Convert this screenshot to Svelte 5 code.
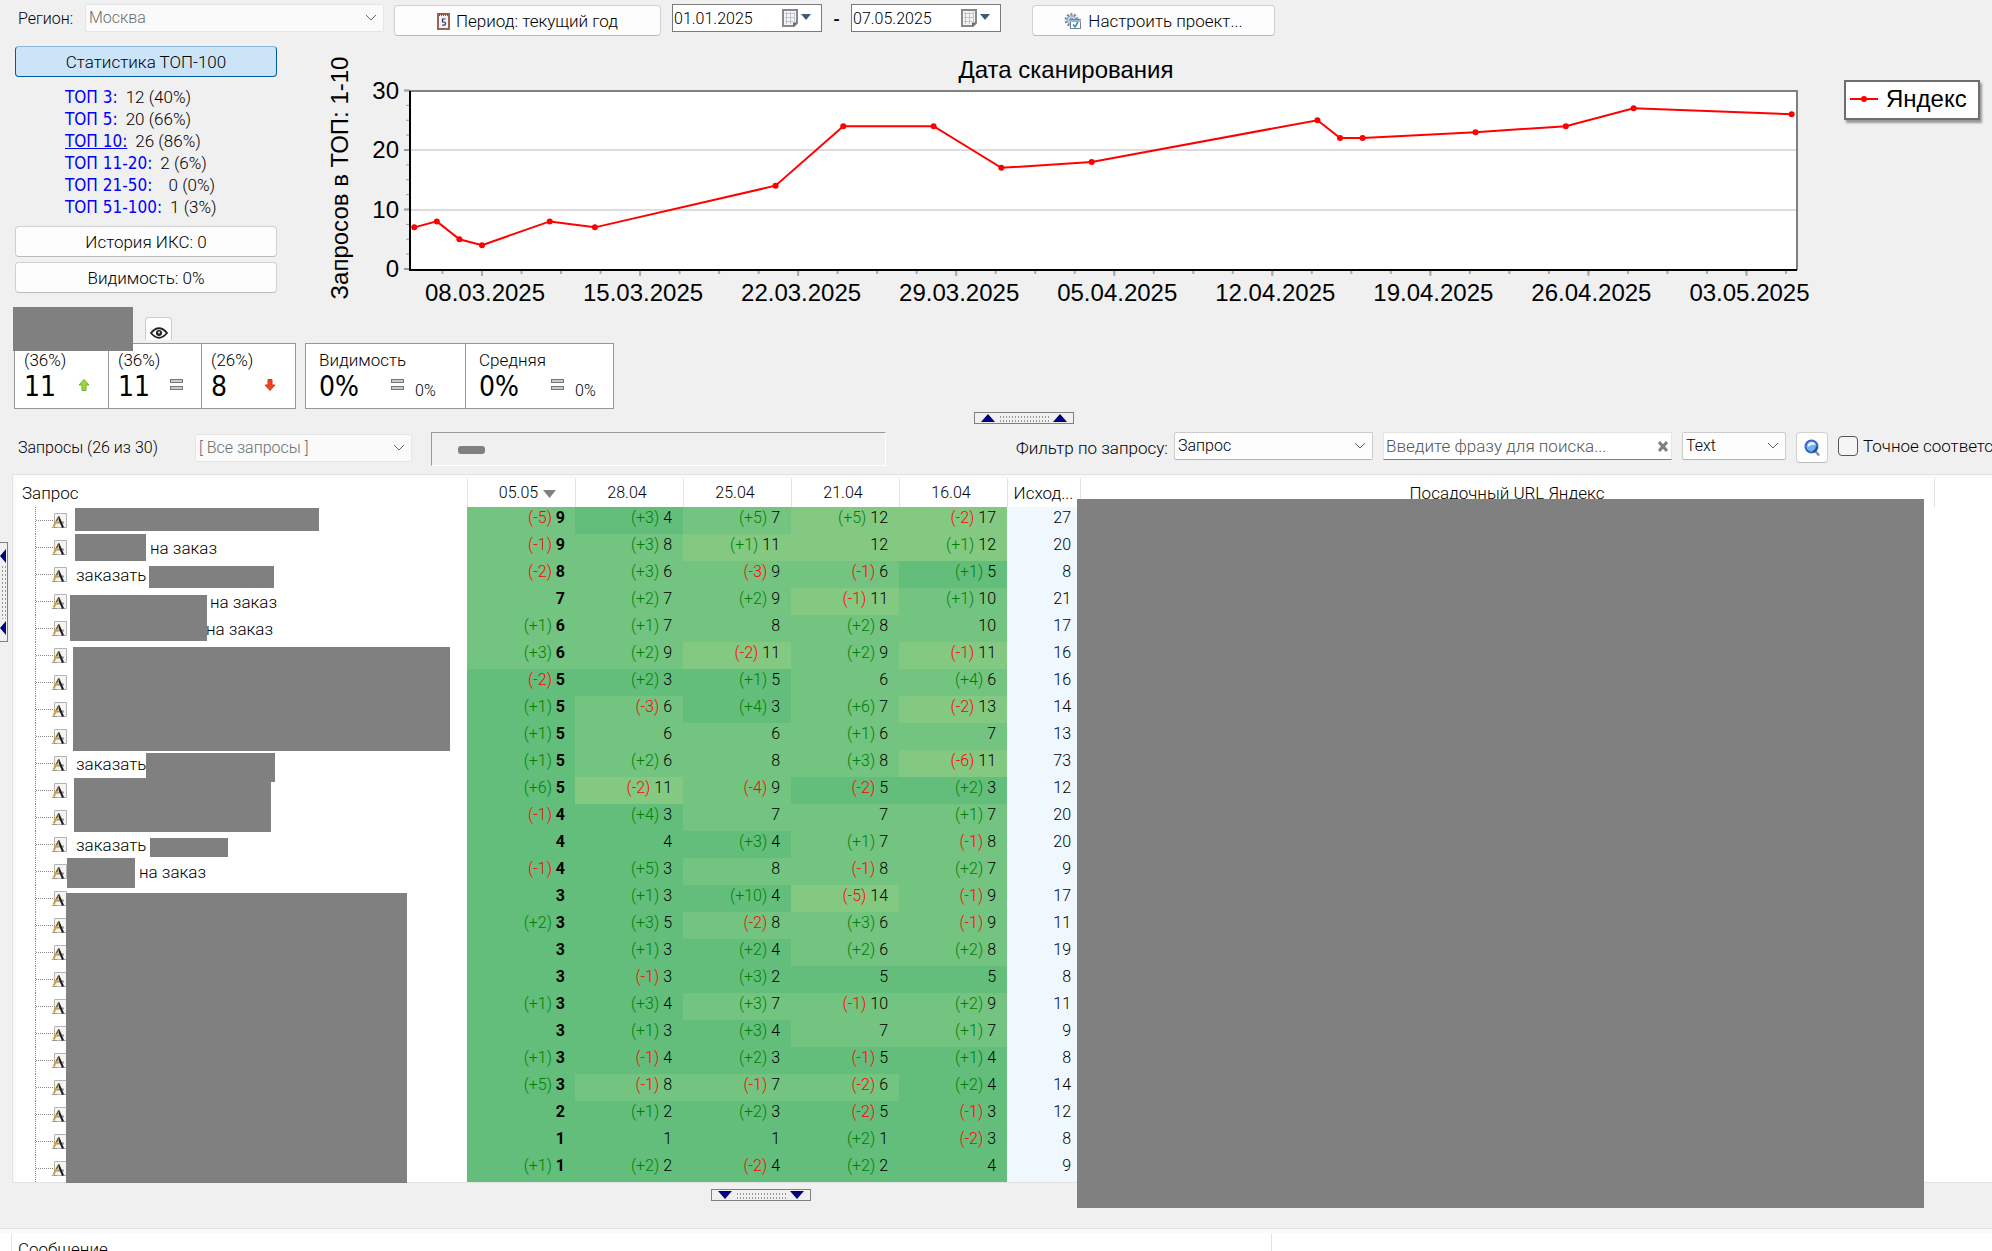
<script>
  const parse = (s) => s.trim().split(/\s+/).map((t) => {
    const m = t.match(/^(?:\(([+-]\d+)\))?(\d+)$/);
    return { delta: m[1] ?? '', value: +m[2] };
  });
  const shade = (v) => (v <= 5 ? 'top5' : v <= 10 ? 'top10' : 'top20');

  const dates = ['05.05', '28.04', '25.04', '21.04', '16.04'];

  // Text of a query with its indent, and the blocks that hide private words: [left, top, width, height].
  const rows = [
    { p: '(-5)9 (+3)4 (+5)7 (+5)12 (-2)17', s: 27, hide: [59, 1, 244, 23] },
    { p: '(-1)9 (+3)8 (+1)11 12 (+1)12', s: 20, text: 'на заказ', at: 134, hide: [59, 0, 71, 27] },
    { p: '(-2)8 (+3)6 (-3)9 (-1)6 (+1)5', s: 8, text: 'заказать', at: 60, hide: [133, 5, 125, 22] },
    { p: '7 (+2)7 (+2)9 (-1)11 (+1)10', s: 21, text: 'на заказ', at: 194, hide: [54, 7, 137, 46] },
    { p: '(+1)6 (+1)7 8 (+2)8 10', s: 17, text: 'на заказ', at: 190 },
    { p: '(+3)6 (+2)9 (-2)11 (+2)9 (-1)11', s: 16, hide: [57, 5, 377, 104] },
    { p: '(-2)5 (+2)3 (+1)5 6 (+4)6', s: 16 },
    { p: '(+1)5 (-3)6 (+4)3 (+6)7 (-2)13', s: 14 },
    { p: '(+1)5 6 6 (+1)6 7', s: 13 },
    { p: '(+1)5 (+2)6 8 (+3)8 (-6)11', s: 73, text: 'заказать', at: 60, hide: [130, 3, 129, 29] },
    { p: '(+6)5 (-2)11 (-4)9 (-2)5 (+2)3', s: 12, hide: [58, 1, 197, 54] },
    { p: '(-1)4 (+4)3 7 7 (+1)7', s: 20 },
    { p: '4 4 (+3)4 (+1)7 (-1)8', s: 20, text: 'заказать', at: 60, hide: [134, 7, 78, 19] },
    { p: '(-1)4 (+5)3 8 (-1)8 (+2)7', s: 9, text: 'на заказ', at: 123, hide: [51, 0, 68, 30] },
    { p: '3 (+1)3 (+10)4 (-5)14 (-1)9', s: 17, hide: [50, 8, 341, 290] },
    { p: '(+2)3 (+3)5 (-2)8 (+3)6 (-1)9', s: 11 },
    { p: '3 (+1)3 (+2)4 (+2)6 (+2)8', s: 19 },
    { p: '3 (-1)3 (+3)2 5 5', s: 8 },
    { p: '(+1)3 (+3)4 (+3)7 (-1)10 (+2)9', s: 11 },
    { p: '3 (+1)3 (+3)4 7 (+1)7', s: 9 },
    { p: '(+1)3 (-1)4 (+2)3 (-1)5 (+1)4', s: 8 },
    { p: '(+5)3 (-1)8 (-1)7 (-2)6 (+2)4', s: 14 },
    { p: '2 (+1)2 (+2)3 (-2)5 (-1)3', s: 12 },
    { p: '1 1 1 (+2)1 (-2)3', s: 8 },
    { p: '(+1)1 (+2)2 (-2)4 (+2)2 4', s: 9 }
  ].map((r) => ({ ...r, cells: parse(r.p) }));

  const tops = [
    ['ТОП 3:', '12 (40%)'],
    ['ТОП 5:', '20 (66%)'],
    ['ТОП 10:', '26 (86%)'],
    ['ТОП 11-20:', '2 (6%)'],
    ['ТОП 21-50:', '  0 (0%)'],
    ['ТОП 51-100:', '1 (3%)']
  ];

  // Chart: days counted from 08.03.2025.
  const days = [-3, -2, -1, 0, 3, 5, 13, 16, 20, 23, 27, 37, 38, 39, 44, 48, 51, 58];
  const found = [7, 8, 5, 4, 8, 7, 14, 24, 24, 17, 18, 25, 22, 22, 23, 24, 27, 26];
  const px = (d) => 162 + d * 22.58;
  const py = (v) => 223 - v * 5.95;
  const pts = days.map((d, i) => ({ x: px(d), y: py(found[i]) }));
  const line = pts.map((p) => `${p.x},${p.y}`).join(' ');
  const weeks = ['08.03.2025', '15.03.2025', '22.03.2025', '29.03.2025', '05.04.2025', '12.04.2025', '19.04.2025', '26.04.2025', '03.05.2025'];
  const minorX = Array.from({ length: 35 }, (_, i) => px((i - 1) * 1.75));
  const minorY = Array.from({ length: 12 }, (_, i) => py(i * 2.5));

  let region = $state('Москва');
  let from = $state('01.01.2025');
  let to = $state('07.05.2025');
  let phrase = $state('');
  let exact = $state(false);
</script>

{#snippet chevron()}
  <svg class="chev" viewBox="0 0 12 8" aria-hidden="true"><path d="M1 1l5 5 5-5" /></svg>
{/snippet}

{#snippet dateIcon()}
  <svg width="32" height="20" viewBox="0 0 32 20" aria-hidden="true">
    <path d="M2 2h14v13l-3 3H2z" fill="#f4f4f6" stroke="#8c8689" stroke-width="2" />
    <path d="M4 5.500h10M4 9.500h10M4 13.500h8M5.500 4v12M9.500 4v12M13.500 4v10" stroke="#bcc4d2" fill="none" />
    <path d="M12 18.500v-4h4z" fill="#6c6669" />
    <path d="M20 6h10l-5 6z" fill="#40587c" />
  </svg>
{/snippet}

{#snippet equals()}
  <svg width="13" height="12" viewBox="0 0 13 12" aria-hidden="true">
    <rect x=".5" y=".5" width="12" height="3" fill="#ccc" stroke="#777" />
    <rect x=".5" y="7.500" width="12" height="3" fill="#ccc" stroke="#777" />
  </svg>
{/snippet}

{#snippet gripTri(d)}
  <svg width="14" height="8" viewBox="0 0 14 8" aria-hidden="true"><path {d} fill="#00007f" /></svg>
{/snippet}

<main class="app">
  <header class="bar">
    <label for="region" class="region-label">Регион:</label>
    <span class="select region">
      <select id="region" bind:value={region} disabled><option>Москва</option></select>
      {@render chevron()}
    </span>
    <button class="btn period">
      <svg width="13" height="18" viewBox="0 0 13 18" aria-hidden="true">
        <rect x="1" y="2" width="11" height="15" fill="#eef1fa" stroke="#9a6450" stroke-width="2" />
        <path d="M2 2.500h9" stroke="#4b5f9a" stroke-width="3" stroke-dasharray="1 1" />
        <path d="M8.500 7h-3v3h1.500q1.500 0 1.500 1.600t-1.600 1.600h-1.600" fill="none" stroke="#26335c" stroke-width="1.200" />
      </svg>
      Период: текущий год
    </button>
    <span class="date">
      <input aria-label="Начало периода" bind:value={from} />
      {@render dateIcon()}
    </span>
    <span class="dash">-</span>
    <span class="date">
      <input aria-label="Конец периода" bind:value={to} />
      {@render dateIcon()}
    </span>
    <button class="btn setup">
      <svg width="18" height="18" viewBox="0 0 18 18" aria-hidden="true">
        <circle cx="7.500" cy="8" r="5.500" fill="none" stroke="#7796b4" stroke-width="3" stroke-dasharray="2 1.450" />
        <circle cx="7.500" cy="8" r="4.200" fill="#cfe0ef" stroke="#8fabc5" stroke-width="1.500" />
        <circle cx="7.500" cy="8" r="1.800" fill="#fff" stroke="#6886a3" />
        <rect x="6.500" y="7.500" width="10" height="9" fill="#fff" stroke="#77818c" />
        <path d="M6 9h11" stroke="#9fb5c9" stroke-width="2" />
        <path d="M9 12.500l2 2.500 3-5" fill="none" stroke="#1f8ad6" stroke-width="1.500" />
      </svg>
      Настроить проект...
    </button>
  </header>

  <section class="overview">
    <div class="stats">
      <button class="btn active">Статистика ТОП-100</button>
      <ul>
        {#each tops as [name, value]}
          <li><a href="#top" class:current={name === 'ТОП 10:'}>{name}</a><span>{value}</span></li>
        {/each}
      </ul>
      <button class="btn">История ИКС: 0</button>
      <button class="btn">Видимость: 0%</button>
    </div>

    <svg class="chart" viewBox="0 0 1500 263" role="img" aria-label="Запросов в ТОП: 1-10">
      <text x="746" y="32" text-anchor="middle">Дата сканирования</text>
      <text transform="translate(28 132) rotate(-90)" text-anchor="middle">Запросов в ТОП: 1-10</text>
      <rect x="90" y="45" width="1387" height="179" fill="#fff" />
      {#each [10, 20] as v}
        <path d="M90 {Math.round(py(v))}H1477" stroke="#dcdcdc" stroke-width="2" />
      {/each}
      <path d="M90 45H1477V224" fill="none" stroke="#808080" stroke-width="2" />
      {#each minorY as y}<path d="M86 {y}h4" stroke="#999" />{/each}
      {#each minorX as x}<path d="M{x} 225v3" stroke="#aaa" stroke-width="2" />{/each}
      {#each [0, 10, 20, 30] as v}
        <path d="M84 {py(v)}h6" stroke="#999" stroke-width="2" />
        <text x="79" y={py(v) + 8} text-anchor="end">{v}</text>
      {/each}
      {#each weeks as w, i}
        <path d="M{px(i * 7)} 225v5" stroke="#aaa" stroke-width="2" />
        <text x={px(i * 7) + 3} y="255" text-anchor="middle">{w}</text>
      {/each}
      <path d="M90 45V224H1477" fill="none" stroke="#000" stroke-width="2" />
      <polyline points={line} fill="none" stroke="#f00" stroke-width="2" />
      {#each pts as p}<circle cx={p.x} cy={p.y} r="3" fill="#f00" />{/each}
    </svg>

    <div class="legend">
      <svg width="28" height="8" viewBox="0 0 28 8" aria-hidden="true">
        <path d="M0 4h28" stroke="#f00" stroke-width="2" /><circle cx="14" cy="4" r="3" fill="#f00" />
      </svg>
      Яндекс
    </div>
  </section>

  <section class="summary">
    <div class="summary-head">
      <span class="hidden-title"></span>
      <button class="eye" aria-label="Показать">
        <svg width="18" height="12" viewBox="0 0 18 12" aria-hidden="true">
          <path d="M1 6q8-9.500 16 0q-8 9.500-16 0z" fill="#fff" stroke="#222" stroke-width="1.800" />
          <circle cx="9" cy="6" r="3" fill="#222" /><circle cx="9" cy="5.500" r="1" fill="#fff" />
        </svg>
      </button>
    </div>
    <div class="cards">
      <div class="card">
        <span class="cap">(36%)</span><strong>11</strong>
        <svg class="mark" width="12" height="12" viewBox="0 0 12 12" aria-hidden="true"><path d="M6 .5l5 5.500H8v5.500H4V6H1z" fill="#9bd83c" stroke="#6fae2c" /></svg>
      </div>
      <div class="card">
        <span class="cap">(36%)</span><strong>11</strong><span class="mark">{@render equals()}</span>
      </div>
      <div class="card">
        <span class="cap">(26%)</span><strong>8</strong>
        <svg class="mark" width="12" height="12" viewBox="0 0 12 12" aria-hidden="true"><path d="M6 11.500L1 6h3V.5h4V6h3z" fill="#f0441f" stroke="#d03818" /></svg>
      </div>
    </div>
    <div class="cards wide">
      <div class="card">
        <span class="cap">Видимость</span><strong>0%</strong><span class="mark">{@render equals()}</span><span class="diff">0%</span>
      </div>
      <div class="card">
        <span class="cap">Средняя</span><strong>0%</strong><span class="mark">{@render equals()}</span><span class="diff">0%</span>
      </div>
    </div>
  </section>

  <button class="grip up" aria-label="Свернуть график">
    {@render gripTri('M0 8L7 0l7 8z')}<i></i>{@render gripTri('M0 8L7 0l7 8z')}
  </button>

  <section class="filters">
    <span class="count">Запросы (26 из 30)</span>
    <span class="select groups">
      <select aria-label="Группа запросов" disabled><option>[ Все запросы ]</option></select>
      {@render chevron()}
    </span>
    <div class="tags"><span></span></div>
    <label for="field" class="field-label">Фильтр по запросу:</label>
    <span class="select field">
      <select id="field"><option>Запрос</option></select>
      {@render chevron()}
    </span>
    <span class="search">
      <input aria-label="Фраза" placeholder="Введите фразу для поиска..." bind:value={phrase} />
      <button aria-label="Очистить" onclick={() => (phrase = '')}>
        <svg width="10" height="11" viewBox="0 0 10 11" aria-hidden="true"><path d="M1 1l8 9M9 1L1 10" stroke="#808080" stroke-width="3" /></svg>
      </button>
    </span>
    <span class="select kind">
      <select aria-label="Вид поиска"><option>Text</option></select>
      {@render chevron()}
    </span>
    <button class="btn find" aria-label="Найти">
      <svg width="16" height="18" viewBox="0 0 16 18" aria-hidden="true">
        <path d="M10.500 11l4.500 5.500" stroke="#8a8f9c" stroke-width="2.500" />
        <circle cx="7.500" cy="7.500" r="6" fill="#6fb2f2" stroke="#3a66c4" stroke-width="2" />
        <path d="M3.500 8q0-5 4.500-5q3 0 3.500 2.500q-5 0-8 2.500z" fill="#e4f2ff" />
        <path d="M9 12.500q3.500-1 3.500-5" fill="none" stroke="#1f3f9c" stroke-width="1.500" />
      </svg>
    </button>
    <input type="checkbox" id="exact" bind:checked={exact} />
    <label for="exact" class="exact-label">Точное соответствие</label>
  </section>

  <section class="grid">
    <table>
      <colgroup>
        <col class="c-query" />
        {#each dates as d}<col class="c-date" />{/each}
        <col class="c-start" /><col class="c-url" /><col />
      </colgroup>
      <thead>
        <tr>
          <th class="left">Запрос</th>
          {#each dates as d, i}
            <th class="day" class:sorted={i === 0}>{d}{#if i === 0}<svg width="13" height="8" viewBox="0 0 13 8" aria-hidden="true"><path d="M0 0h13L6.500 8z" fill="#808080" /></svg>{/if}</th>
          {/each}
          <th>Исход...</th><th>Посадочный URL Яндекс</th><th></th>
        </tr>
      </thead>
      <tbody>
        {#each rows as r}
          <tr>
            <td class="query">
              <div class="node">
                <svg width="15" height="16" viewBox="0 0 15 16" aria-hidden="true">
                  <path d="M2.500 .5h12v14h-12z" fill="#f4f4f4" stroke="#b4b4b4" />
                  <path d="M2 9.500h10" stroke="#9a9a9a" stroke-width="2" />
                  <path d="M0 14.500h5M9 14.500h4" stroke="#999" />
                  <path d="M6.500 4l4.500 10.500" stroke="#1c1c1c" stroke-width="2" />
                  <path d="M6.500 4.500L1.500 13.500" stroke="#d9a032" stroke-width="2" />
                  <path d="M7 3L4.500 8" stroke="#444" />
                </svg>
                {#if r.text}<span class="text" style="left:{r.at}px">{r.text}</span>{/if}
                {#if r.hide}
                  <span class="mask" style="left:{r.hide[0]}px;top:{r.hide[1]}px;width:{r.hide[2]}px;height:{r.hide[3]}px"></span>
                {/if}
              </div>
            </td>
            {#each r.cells as c, i}
              <td class="pos {shade(c.value)}" class:latest={i === 0}>
                {#if c.delta}<span class={c.delta[0] === '+' ? 'plus' : 'minus'}>({c.delta})</span>{/if}
                <span class="val">{c.value}</span>
              </td>
            {/each}
            <td class="start">{r.s}</td><td></td><td></td>
          </tr>
        {/each}
      </tbody>
    </table>
    <div class="url-mask"></div>
    <button class="grip side" aria-label="Свернуть панель">
      <svg width="6" height="14" viewBox="0 0 6 14" aria-hidden="true"><path d="M6 0L0 7l6 7z" fill="#00007f" /></svg>
      <i></i>
      <svg width="6" height="14" viewBox="0 0 6 14" aria-hidden="true"><path d="M6 0L0 7l6 7z" fill="#00007f" /></svg>
    </button>
  </section>

  <button class="grip down" aria-label="Свернуть сообщения">
    {@render gripTri('M0 0h14L7 8z')}<i></i>{@render gripTri('M0 0h14L7 8z')}
  </button>

  <section class="messages">
    <div class="message-head">Сообщение</div>
  </section>
</main>

<style>
  :global(body) { margin: 0; background: #f0f0f0; }
  .app {
    height: 100vh; overflow: hidden; display: flex; flex-direction: column;
    background: #f0f0f0; color: #000;
    font: 300 17px/20px Roboto, "Noto Sans", sans-serif;
  }
  .app * { box-sizing: border-box; }
  button, input, select { font: inherit; color: inherit; margin: 0; }
  .btn {
    height: 31px; padding: 0; border: 1px solid #d0d0d0; border-bottom-color: #bababa; border-radius: 4px;
    background: #fdfdfd; display: flex; align-items: center; justify-content: center; gap: 6px;
  }
  .select { position: relative; display: flex; height: 28px; font-size: 16px; }
  .select select {
    appearance: none; width: 100%; height: 28px; padding: 0 20px 0 3px;
    border: 1px solid #ccc; border-bottom-color: #b4b4b4; border-radius: 2px; background: #fdfdfd;
  }
  .select select:disabled { opacity: 1; color: #6d6d6d; background: #fafafa; border-color: #e6e6e6; }
  .chev { position: absolute; right: 7px; top: 10px; width: 12px; height: 8px; fill: none; stroke: #666; pointer-events: none; }

  .bar { display: flex; align-items: flex-start; padding: 4px 0 0 18px; height: 46px; }
  .region-label { width: 67px; padding-top: 5px; font-size: 16px; }
  .region { width: 299px; margin-right: 10px; }
  .period { width: 267px; margin: 1px 11px 0 0; }
  .setup { width: 243px; margin: 1px 0 0 31px; }
  .date { width: 150px; height: 28px; display: flex; align-items: center; border: 1px solid #7a7a7a; background: #fff; font-size: 16px; }
  .date input { width: 108px; height: 26px; padding: 0 0 0 1px; border: 0; background: none; outline: 0; }
  .dash { width: 29px; padding-top: 5px; text-align: center; font-weight: 700; }

  .overview { display: flex; align-items: flex-start; padding-left: 15px; height: 261px; }
  .stats { width: 262px; display: flex; flex-direction: column; gap: 5px; }
  .stats .active { background: #cce4f7; border-color: #005a9e; border-top-color: #8cb8dc; }
  .stats ul { list-style: none; margin: 4px 0; padding: 0 0 0 50px; height: 131px; }
  .stats li { display: flex; gap: 8px; height: 22px; line-height: 22px; white-space: pre; }
  .stats a { color: #00f; text-decoration: none; font-family: "DejaVu Sans Condensed", "DejaVu Sans", sans-serif; font-weight: 400; }
  .stats a.current { text-decoration: underline; }
  .chart { flex: 1; min-width: 0; margin-left: 43px; font: 400 24px "Liberation Sans", sans-serif; }
  .legend {
    margin: 34px 12px 0 24px; width: 136px; height: 40px; display: flex; align-items: center; gap: 8px; padding: 0 0 2px 4px;
    border: 2px solid #6e6e6e; background: #fff; box-shadow: 2px 3px 2px #999;
    font: 400 24px/24px "Liberation Sans", sans-serif;
  }

  .summary { display: flex; flex-wrap: wrap; align-content: flex-start; column-gap: 9px; padding-left: 14px; height: 105px; }
  .summary-head { width: 100%; height: 36px; display: flex; align-items: flex-start; margin-left: -1px; }
  .hidden-title { width: 120px; height: 44px; background: #808080; position: relative; z-index: 1; }
  .eye {
    width: 27px; height: 23px; margin: 10px 0 0 12px; padding: 8px 0 0; border: 1px solid #ccc; border-bottom: 0;
    border-radius: 4px 4px 0 0; background: #fdfdfd; display: flex; align-items: center; justify-content: center;
  }
  .cards { display: flex; height: 66px; border: 1px solid #979797; background: #fff; width: 282px; }
  .cards.wide { width: 309px; }
  .card { flex: 0 0 93px; position: relative; padding: 6px 0 0 9px; border-left: 1px solid #979797; }
  .card:first-child { border-left: 0; }
  .wide .card { padding-left: 13px; flex: 0 0 149px; }
  .wide .card:first-child { flex: 0 0 159px; }
  .cap { display: block; }
  .card strong { display: block; font: 400 28px/34px "DejaVu Sans Condensed", "DejaVu Sans", sans-serif; }
  .mark { position: absolute; right: 18px; top: 35px; line-height: 0; }
  .wide .mark { left: 85px; right: auto; }
  .diff { position: absolute; left: 109px; top: 37px; font-size: 16px; }

  .grip {
    display: flex; align-items: center; justify-content: space-between; padding: 0 6px; width: 100px; height: 12px;
    border: 1px solid #808080; background: #f0f0f0; flex: none;
  }
  .grip i { width: 50px; height: 7px; background: radial-gradient(#999 1px, transparent 1px) 0 0 / 3px 4px; }
  .up { margin: 0 auto 8px 974px; }
  .down { margin: 6px auto 27px 711px; }
  .side { position: absolute; left: -14px; top: 67px; width: 9px; height: 100px; padding: 6px 0; flex-direction: column; border-left: 0; }
  .side i { width: 5px; height: 54px; }

  .filters { display: flex; align-items: flex-start; height: 42px; padding-left: 18px; white-space: nowrap; flex: none; }
  .count { width: 177px; padding-top: 6px; font-size: 16px; }
  .groups { width: 217px; margin-top: 2px; }
  .tags { flex: 0 1 455px; height: 34px; margin: 0 130px 0 19px; border: 1px solid #999; border-right-color: #fff; border-bottom-color: #fff; padding: 13px 0 0 26px; }
  .tags span { display: block; width: 27px; height: 8px; border-radius: 3px; background: #808080; }
  .field-label { width: 158px; padding-top: 6px; }
  .field { width: 199px; margin-right: 10px; }
  .search { width: 289px; height: 28px; display: flex; align-items: center; background: #fff; border: 1px solid #e4e4e4; border-bottom: 1px solid #808080; margin-right: 10px; }
  .search input { flex: 1; min-width: 0; height: 26px; border: 0; padding: 0 2px; background: none; outline: 0; }
  .search input::placeholder { color: #555; }
  .search button { border: 0; background: none; padding: 0 3px; line-height: 0; }
  .kind { width: 104px; margin-right: 10px; }
  .find { width: 32px; margin-right: 10px; flex: none; }
  .filters input[type='checkbox'] { appearance: none; flex: none; width: 20px; height: 20px; margin: 4px 5px 0 0; border: 1px solid #555; border-radius: 4px; background: #f5f5f5; }
  .exact-label { flex: 1 1 0; min-width: 0; overflow: hidden; padding-top: 4px; }

  .grid { position: relative; margin-left: 12px; border: 1px solid #e2e2e2; border-right: 0; padding: 3px 0 1px 3px; background: #fafafa; height: 709px; flex: none; }
  table { width: 100%; border-collapse: collapse; table-layout: fixed; background: #fff; }
  .c-query { width: 451px; }
  .c-date { width: 108px; }
  .c-start { width: 73px; }
  .c-url { width: 854px; }
  th { height: 29px; padding: 0; font-weight: inherit; border-right: 1px solid #e2e2e2; white-space: nowrap; overflow: hidden; }
  th:last-child { border-right: 0; }
  th.left { text-align: left; padding-left: 6px; }
  th.day { padding-right: 4px; font-size: 16px; }
  th.sorted { padding: 0 0 0 13px; }
  th svg { margin-left: 5px; }
  td { height: 27px; padding: 0; text-align: right; }
  .node {
    position: relative; height: 27px; margin-left: 19px; border-left: 1px dotted #888;
    display: flex; align-items: center; padding-left: 16px;
  }
  .node::before { content: ''; position: absolute; left: 0; top: 13px; width: 17px; border-top: 1px dotted #888; }
  .node .text { position: absolute; top: 4px; margin-left: -20px; }
  .mask { position: absolute; margin-left: -20px; background: #808080; z-index: 1; }
  .pos { padding: 0 11px 6px 0; font-size: 16px; line-height: 20px; }
  .pos.latest { padding-right: 10px; }
  .start { padding: 0 9px 6px 0; background: #f0f8ff; font-size: 16px; line-height: 20px; }
  .latest .val { font-weight: 700; }
  .plus { color: #008000; }
  .minus { color: #f00; }
  .top5 { background: #63be7b; }
  .top10 { background: #73c480; }
  .top20 { background: #84c982; }
  .url-mask { position: absolute; left: 1064px; right: 68px; top: 24px; height: 709px; background: #808080; z-index: 2; }

  .messages { flex: 1; border-top: 1px solid #e2e2e2; box-shadow: inset 0 4px #fafafa; background: #fff; padding-top: 5px; min-height: 0; }
  .message-head { margin-left: 11px; width: 1261px; padding: 5px 0 0 6px; border: 1px solid #e2e2e2; border-width: 0 1px; }
</style>
